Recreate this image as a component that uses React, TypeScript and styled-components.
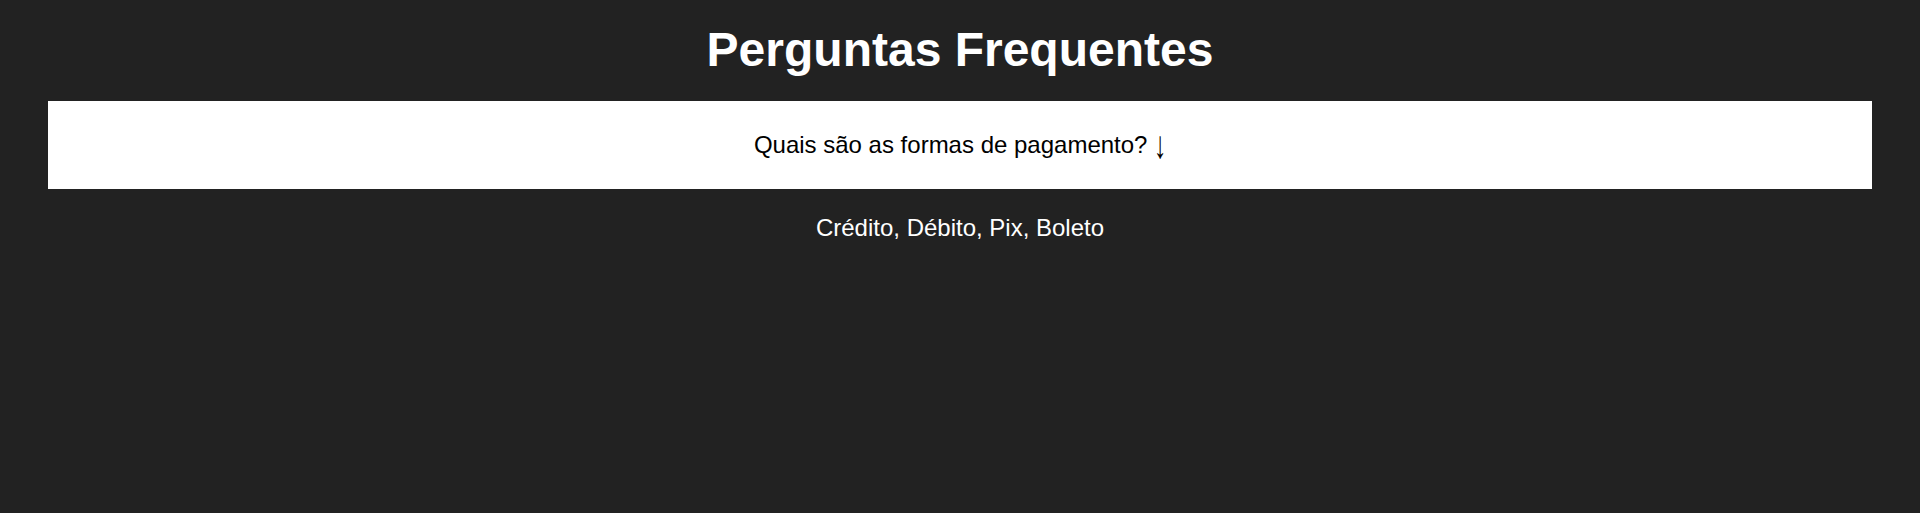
import React from "react";
import styled, { createGlobalStyle } from "styled-components";

const Global = createGlobalStyle`
  html, body { margin: 0; padding: 0; background: #222222; }
  body { font-family: "Liberation Sans", Arial, sans-serif; }
`;

const Page = styled.main`
  min-height: 513px;
  box-sizing: border-box;
  padding: 22px 48px 0;
  color: #ffffff;
`;

const Title = styled.h1`
  margin: 0 0 24px;
  font-size: 48px;
  font-weight: 700;
  text-align: center;
  line-height: normal;
`;

const Question = styled.div`
  background: #ffffff;
  color: #000000;
  height: 88px;
  box-sizing: border-box;
  padding: 30px 0;
  font-size: 24px;
  line-height: normal;
  text-align: center;
  cursor: pointer;
`;

const Arrow = styled.span`
  display: inline-block;
  font-size: 24px;
  line-height: 0;
  transform: scale(1.05, 1.6);
  transform-origin: center bottom;
`;

const Answer = styled.p`
  margin: 25px 0 0;
  font-size: 24px;
  line-height: normal;
  text-align: center;
  color: #ffffff;
`;

export default function App() {
  return (
    <>
      <Global />
      <Page>
        <Title>Perguntas Frequentes</Title>
        <section>
          <Question>
            Quais são as formas de pagamento? <Arrow>↓</Arrow>
          </Question>
          <Answer>Crédito, Débito, Pix, Boleto</Answer>
        </section>
      </Page>
    </>
  );
}
